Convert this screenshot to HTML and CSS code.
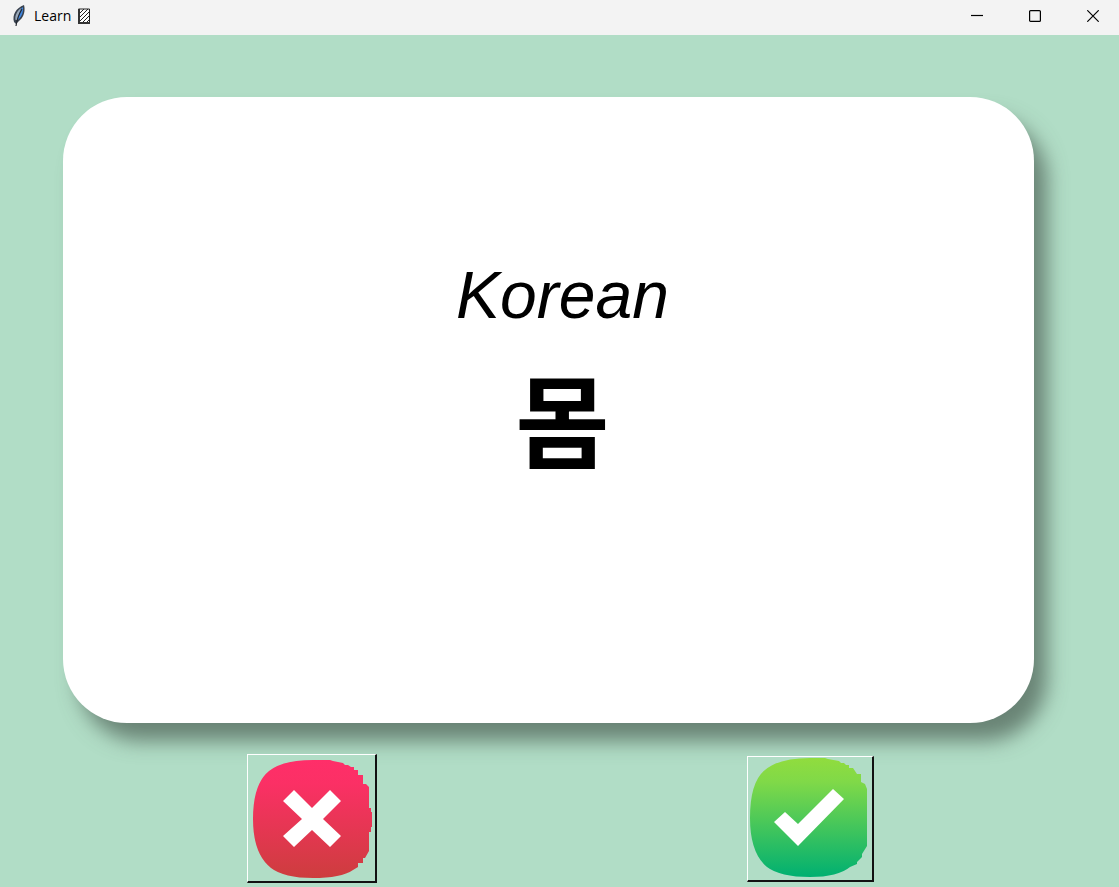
FILE: index.html
```html
<!DOCTYPE html>
<html lang="en">
<head>
<meta charset="utf-8">
<meta name="viewport" content="width=device-width, initial-scale=1">
<title>Learn</title>
<link rel="stylesheet" href="styles.css">
</head>
<body>
<header class="titlebar">
  <svg class="feather" viewBox="0 0 14 22" aria-hidden="true">
    <path d="M2 17C0 10 4 3 12 0c1.500 5 0 12-4 15l-4 4z" fill="#39424f"/>
    <path d="M5.500 15C5 10 7 5 11 2c.5 5-1 9-4 12z" fill="#3f86e0"/>
    <path d="M3.500 15C2.500 11 5 6 9 3L5 15z" fill="#9aa9ba"/>
    <path d="M10 4C7 9 5 14 4 21" fill="none" stroke="#22262d" stroke-width="1.2"/>
  </svg>
  <h1 class="title">Learn</h1>
  <svg class="book" viewBox="0 0 14 16" aria-hidden="true">
    <path d="M1.500 1h11v14h-11z" fill="#fff" stroke="#222"/>
    <path d="M3 5l4-4M3 9l8-8M3 13l10-10M5 15l8-8M9 15l4-4" stroke="#222"/>
    <path d="M2 1v14M1 15h12" stroke="#333" stroke-width="2"/>
  </svg>
  <div class="controls">
    <button class="control" type="button" aria-label="Minimize"><svg viewBox="0 0 12 12"><path d="M0 5.500h12"/></svg></button>
    <button class="control" type="button" aria-label="Maximize"><svg viewBox="0 0 12 12"><rect x=".6" y=".6" width="10.800" height="10.800" rx="1"/></svg></button>
    <button class="control" type="button" aria-label="Close"><svg viewBox="0 0 12 12"><path d="M.3.3l11.400 11.400M11.700.3L.3 11.700"/></svg></button>
  </div>
</header>
<main class="stage">
  <section class="card">
    <p class="language">Korean</p>
    <p class="word" lang="ko">몸</p>
  </section>
  <div class="answers">
    <button class="answer wrong" type="button" aria-label="I don't know this word">
      <svg viewBox="0 0 120 119" aria-hidden="true">
        <defs><linearGradient id="red" x1="0" y1="0" x2="0" y2="1"><stop offset="0" stop-color="#ff2e69"/><stop offset=".2" stop-color="#fb3065"/><stop offset="1" stop-color="#cd3d3e"/></linearGradient></defs>
        <path fill="url(#red)" d="M60 0H77L80 1L90 3L92 5H95L98 7H101V10H105V15H110V24H113L116 27V48H118V52H119V67H118V72H116V91L112 98H110V103H105V107L100 110Q88 118 60 118Q31 118 18 108Q0 94 0 59Q0 24 16 11Q30 0 60 0z"/>
        <path fill="#fff" d="M41 30L59 48L77 30L88 41L70 59L88 76L77 87L59 70L41 87L30 76L49 59L30 41z"/>
      </svg>
    </button>
    <button class="answer right" type="button" aria-label="I know this word">
      <svg viewBox="0 0 117 119" aria-hidden="true">
        <defs><linearGradient id="green" x1="0" y1="0" x2="0" y2="1"><stop offset="0" stop-color="#91dc3e"/><stop offset=".2" stop-color="#80d948"/><stop offset="1" stop-color="#00b071"/></linearGradient></defs>
        <path fill="url(#green)" d="M60 0H75L78 1L89 3L91 5H94L96 7H99V10H103L107 16H111V24L115 26L117 31V88L112 96V99L107 104V106L100 109Q88 119 60 119Q30 119 17 109Q0 95 0 60Q0 24 15 12Q29 0 60 0z"/>
        <path fill="#fff" d="M24 64L35 54L48 66L83 31L94 41L48 88z"/>
      </svg>
    </button>
  </div>
</main>
</body>
</html>
```
FILE: styles.css
```css
* {
  box-sizing: border-box;
}

body {
  display: flex;
  flex-direction: column;
  min-height: 100vh;
  margin: 0;
  background: #b1ddc6;
  color: #000;
  font-family: "Liberation Sans", Arial, sans-serif;
}

.titlebar {
  display: flex;
  align-items: center;
  height: 35px;
  padding: 0 0 4px 12px;
  background: #f3f3f3;
}

.feather {
  width: 14px;
  height: 22px;
}

.title {
  margin: 0 6px 0 8px;
  font: 400 14px/20px "Open Sans", "Noto Sans", sans-serif;
}

.book {
  width: 14px;
  height: 16px;
}

.controls {
  display: flex;
  margin-left: auto;
}

.control {
  display: flex;
  align-items: center;
  justify-content: center;
  width: 58px;
  height: 31px;
  padding: 0 0 0 6px;
  border: 0;
  background: none;
}

.control svg {
  width: 12px;
  height: 12px;
  fill: none;
  stroke: #000;
  stroke-width: 1.2;
}

.stage {
  display: flex;
  flex: 1;
  flex-direction: column;
  padding: 62px 58px 4px 63px;
}

.card {
  display: flex;
  flex: 1;
  flex-direction: column;
  align-items: center;
  margin-right: 27px;
  padding: 160px 0 100px 28px;
  border-radius: 64px;
  background: #fff;
  box-shadow: 14px 19px 20px -1px rgba(78, 97, 86, 0.72);
}

.language {
  margin: 0;
  font-size: 66px;
  font-style: italic;
  line-height: 76px;
}

.word {
  margin: 12px 0 0;
  font: 700 102px/144px "Noto Sans CJK KR", sans-serif;
}

.answers {
  display: grid;
  grid-template-columns: 1fr 1fr;
  align-items: center;
  justify-items: center;
  margin: 31px 1px 0 -1px;
}

.answer {
  display: flex;
  border: 2px solid;
  border-width: 1px 2px 2px 1px;
  border-color: #fff #111 #111 #fff;
  background: #b1ddc6;
}

.wrong {
  padding: 5px 2px 2px 5px;
}

.right {
  padding: 1px 5px 3px 2px;
}

.wrong svg {
  width: 120px;
  height: 119px;
}

.right svg {
  width: 117px;
  height: 119px;
}
```
